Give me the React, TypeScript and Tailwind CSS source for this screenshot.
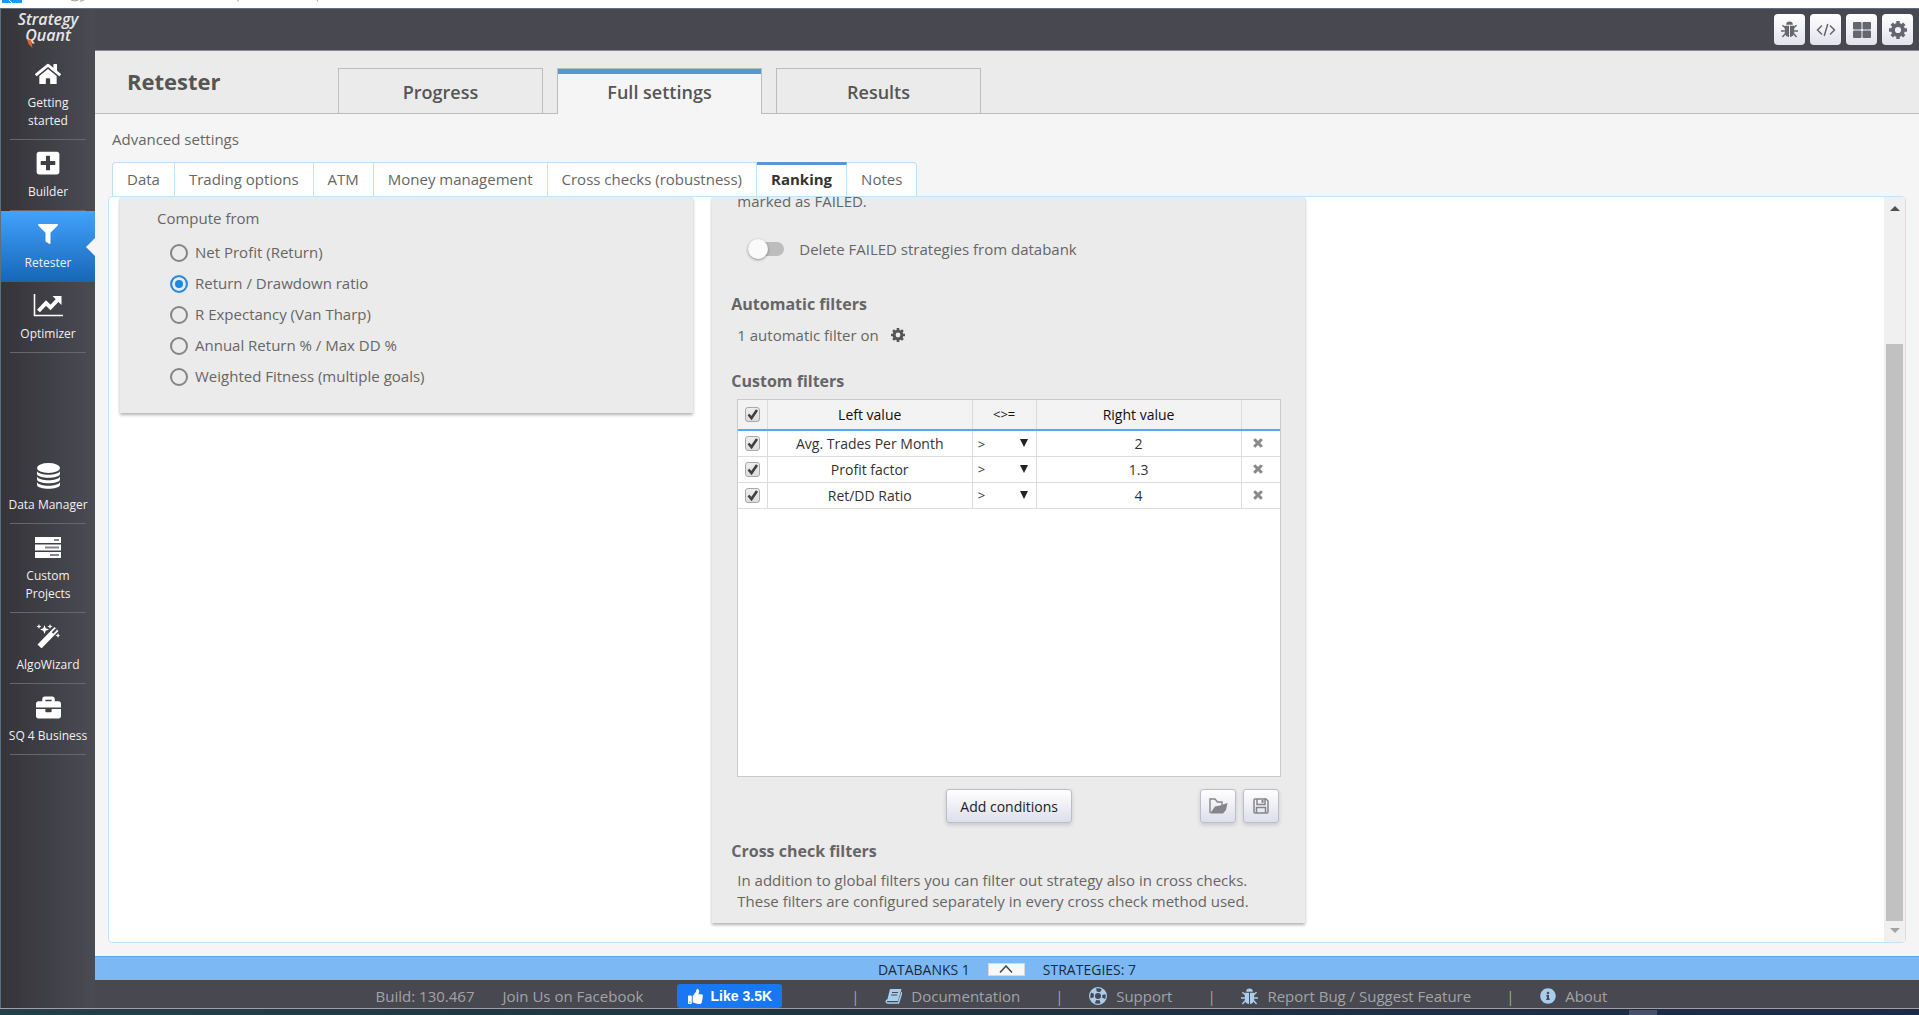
import { useState } from "react";
import type { ReactNode } from "react";
import {
  FaBriefcase,
  FaFilter,
  FaHome,
  FaInfoCircle,
  FaPlusSquare,
  FaThumbsUp,
  FaTimes,
} from "react-icons/fa";

function ChartIcon() {
  return (
    <svg width="30" height="24" viewBox="0 0 30 24" aria-hidden="true">
      <path d="M1.5 1v21.5H30" fill="none" stroke="white" strokeWidth="1.600" />
      <path d="M5.500 18l7.500-8 4.500 4.500L25 6.500" fill="none" stroke="white" strokeWidth="4" />
      <path d="M19.500 3H28.500V12z" fill="white" />
    </svg>
  );
}

function DatabaseIcon() {
  return (
    <svg width="23" height="26" viewBox="0 0 23 26" fill="white" aria-hidden="true">
      <ellipse cx="11.500" cy="5" rx="11.500" ry="5" />
      <path d="M0 8c2 5 21 5 23 0v3c-1 5-22 5-23 0z" />
      <path d="M0 13.500c2 5 21 5 23 0v3c-1 5-22 5-23 0z" />
      <path d="M0 19c2 5 21 5 23 0v3c-1 5-22 5-23 0z" />
    </svg>
  );
}

function TasksIcon() {
  return (
    <svg width="26" height="21" viewBox="0 0 26 21" aria-hidden="true">
      <path d="M0 0h26v6H0zM0 7.500h26v6H0zM0 15h26v6H0z" fill="white" />
      <path d="M19 3h5M10 10.500h14M15 18h9" stroke="#85858b" strokeWidth="2" />
    </svg>
  );
}

function WandIcon() {
  return (
    <svg width="24" height="24" viewBox="0 0 24 24" fill="white" aria-hidden="true">
      <path d="M3.500 22.500L20.500 5" stroke="white" strokeWidth="5.500" />
      <path d="M16.500 9L20.500 5" stroke="#44444c" strokeWidth="2" />
      <path d="M8.500 1l1.200 3.300L13 5.500 9.700 6.700 8.500 10 7.300 6.700 4 5.500l3.300-1.200z" />
      <path d="M3 0l.7 1.800 1.800.7-1.800.7L3 5l-.7-1.800L.5 2.500l1.800-.7zM14 0l.7 1.800 1.800.7-1.800.7L14 5l-.7-1.800-1.800-.7 1.800-.7zM22 9l.7 1.800 1.300.7-1.300.7L22 14l-.7-1.800-1.800-.7 1.800-.7z" />
    </svg>
  );
}

function BugIcon({ size }: { size: number }) {
  return (
    <svg width={size} height={size} viewBox="0 0 18 18" fill="currentColor" aria-hidden="true">
      <path d="M5.500 4a3.500 3.500 0 0 1 7 0z" />
      <path d="M4 5h4.500v12C5.500 17 4 14.500 4 12zM9.500 5H14v7c0 2.500-1.500 5-4.500 5z" />
      <path
        d="M4.500 7L1.500 4.500M4 10.500H0M4.500 13.500l-3 3.500M13.500 7l3-2.500M14 10.500h4M13.500 13.500l3 3.500"
        stroke="currentColor"
        strokeWidth="1.500"
      />
    </svg>
  );
}

function GearIcon({ size }: { size: number }) {
  return (
    <svg width={size} height={size} viewBox="0 0 18 18" fill="none" stroke="currentColor" aria-hidden="true">
      <circle cx="9" cy="9" r="5" strokeWidth="3.800" />
      <path
        d="M9 0v3.500M9 14.500V18M0 9h3.500M14.500 9H18M2.700 2.700l2.400 2.400M12.900 12.900l2.400 2.400M2.700 15.300l2.400-2.400M12.900 5.100l2.400-2.400"
        strokeWidth="3.400"
      />
    </svg>
  );
}

function BookIcon() {
  return (
    <svg width="17" height="15" viewBox="0 0 17 15" aria-hidden="true">
      <path d="M5 0h11.500L13 12H2z" fill="currentColor" />
      <path d="M2.500 10.500c-2 1.500-1.500 3.500.5 3.500h10.500L17 3" fill="none" stroke="currentColor" strokeWidth="1.500" />
      <path d="M7 3.500h6M6.200 6h6" stroke="#484850" strokeWidth="1" />
    </svg>
  );
}

function RingIcon() {
  return (
    <svg width="18" height="18" viewBox="0 0 18 18" fill="none" aria-hidden="true">
      <circle cx="9" cy="9" r="6" stroke="currentColor" strokeWidth="6" />
      <circle cx="9" cy="9" r="6" stroke="#484850" strokeWidth="3.400" strokeDasharray="4.700 4.720" strokeDashoffset="2.350" />
    </svg>
  );
}

function CodeIcon() {
  return (
    <svg width="20" height="14" viewBox="0 0 20 14" fill="none" stroke="#66666e" strokeWidth="1.500" aria-hidden="true">
      <path d="M6 2.500L1.500 7 6 11.500M14 2.500L18.500 7 14 11.500M11.800 1L8.200 13" />
    </svg>
  );
}

function GridIcon() {
  return (
    <svg width="18" height="16" viewBox="0 0 18 16" fill="#66666e" aria-hidden="true">
      <rect width="8.500" height="7.500" rx="1" />
      <rect x="9.500" width="8.500" height="7.500" rx="1" />
      <rect y="8.500" width="8.500" height="7.500" rx="1" />
      <rect x="9.500" y="8.500" width="8.500" height="7.500" rx="1" />
    </svg>
  );
}

function FolderIcon() {
  return (
    <svg width="19" height="16" viewBox="0 0 19 16" aria-hidden="true">
      <path d="M1 15V1h5l2.500 3H13v3" fill="none" stroke="#85858b" strokeWidth="1.400" />
      <path d="M1 15.500L6 8.500l5-1 7.500-2.500L17 12l-3 3.500z" fill="#85858b" />
    </svg>
  );
}

function SaveIcon() {
  return (
    <svg width="16" height="16" viewBox="0 0 16 16" fill="none" stroke="#85858b" strokeWidth="1.500" aria-hidden="true">
      <path d="M1 2a1 1 0 0 1 1-1h11l2 2v11a1 1 0 0 1-1 1H2a1 1 0 0 1-1-1z" />
      <path d="M4 1v5.500h8V1M3.500 15V9.500h9V15" />
      <path d="M9.500 2v3" strokeWidth="2" />
    </svg>
  );
}

function Logo() {
  return (
    <div className="relative h-[42px] pt-[2px] text-center text-[16px] leading-4 font-semibold italic text-[#e6e6e6]">
      Strategy
      <br />
      Quant
      <svg width="6" height="9" viewBox="0 0 6 9" className="absolute top-[30px] left-[26px]" aria-hidden="true">
        <path d="M0 0l4 1 1.500 8L1.500 5z" fill="#e0662b" />
      </svg>
    </div>
  );
}

type NavItemProps = {
  icon: ReactNode;
  label: string;
  active?: boolean;
};

function NavItem({ icon, label, active }: NavItemProps) {
  return (
    <a
      href="#"
      className={
        active
          ? "relative block bg-linear-to-b from-[#42a2fd] to-[#1567b6] px-[9px]"
          : "relative block px-[9px]"
      }
    >
      <span
        className={
          active
            ? "flex flex-col items-center border-b border-transparent pt-[13px] pb-[9px]"
            : "flex flex-col items-center border-b border-[#66666c] pt-[13px] pb-[9px]"
        }
      >
        <span className="flex h-5 items-center">{icon}</span>
        <span className="-mx-2 mt-[10px] max-w-24 text-center text-[12px] leading-[18px] whitespace-pre-line">
          {label}
        </span>
      </span>
      {active && (
        <span className="absolute top-[27px] right-0 border-y-[9px] border-r-[9px] border-y-transparent border-r-[#f5f5f5]" />
      )}
    </a>
  );
}

function Sidebar() {
  return (
    <nav className="w-[95px] shrink-0 border-l border-[#5d6f80] bg-linear-to-r from-[#343439] to-[#4b4b54] text-[#f0f0f0]">
      <Logo />
      <NavItem icon={<FaHome size={26} color="white" />} label={"Getting\nstarted"} />
      <NavItem icon={<FaPlusSquare size={26} color="white" />} label="Builder" />
      <NavItem icon={<FaFilter size={20} color="white" />} label="Retester" active />
      <NavItem icon={<ChartIcon />} label="Optimizer" />
      <div className="mt-[100px]">
        <NavItem icon={<DatabaseIcon />} label="Data Manager" />
        <NavItem icon={<TasksIcon />} label={"Custom\nProjects"} />
        <NavItem icon={<WandIcon />} label="AlgoWizard" />
        <NavItem icon={<FaBriefcase size={25} color="white" />} label="SQ 4 Business" />
      </div>
    </nav>
  );
}

function ToolButton({ label, children }: { label: string; children: ReactNode }) {
  return (
    <button
      aria-label={label}
      className="flex size-[31px] items-center justify-center rounded-[4px] bg-linear-to-b from-white to-[#e2e2ee] text-[#66666e]"
    >
      {children}
    </button>
  );
}

const mainTabs = ["Progress", "Full settings", "Results"];

function MainTabs() {
  return (
    <div className="flex h-[63px] items-end border-b border-[#b9bdc1] bg-[#ebebeb]">
      <h1 className="w-[243px] self-center pb-[2px] pl-[32px] text-[22px] leading-8 font-bold text-[#555]">
        Retester
      </h1>
      <div className="-mb-px flex gap-[14px]">
        {mainTabs.map((tab) => (
          <button
            key={tab}
            className={
              tab === "Full settings"
                ? "h-[46px] w-[205px] border border-b-0 border-[#b9bdc1] bg-[#f5f5f5] pt-[2px] text-[18px] font-semibold text-[#555] shadow-[inset_0_5px_#5896d4]"
                : "h-[46px] w-[205px] border border-[#b9bdc1] pt-[2px] text-[18px] font-semibold text-[#555]"
            }
          >
            {tab}
          </button>
        ))}
      </div>
    </div>
  );
}

const subTabs = [
  "Data",
  "Trading options",
  "ATM",
  "Money management",
  "Cross checks (robustness)",
  "Ranking",
  "Notes",
];

function SubTabs() {
  return (
    <div className="ml-1 flex">
      {subTabs.map((tab) => (
        <button
          key={tab}
          className={
            tab === "Ranking"
              ? "h-[34px] border-t-[3px] border-r border-t-[#5896d4] border-r-[#bfdffb] bg-white px-[14px] pb-[3px] font-bold text-[#333]"
              : "h-[34px] border-t border-r border-[#bfdffb] bg-white px-[14px] first:rounded-tl first:border-l last:rounded-tr"
          }
        >
          {tab}
        </button>
      ))}
    </div>
  );
}

const fitnessOptions = [
  "Net Profit (Return)",
  "Return / Drawdown ratio",
  "R Expectancy (Van Tharp)",
  "Annual Return % / Max DD %",
  "Weighted Fitness (multiple goals)",
];

function ComputeFrom() {
  const [selected, setSelected] = useState("Return / Drawdown ratio");

  return (
    <section className="w-[32.5%] shrink-0 self-start bg-[#ebebeb] pt-[10px] pb-[21px] pl-[37px] shadow-[0_2px_3px_rgba(0,0,0,0.3)]">
      <h2 className="leading-[22px]">Compute from</h2>
      <div className="mt-2 pl-[13px]">
        {fitnessOptions.map((option) => (
          <label key={option} className="flex h-[31px] items-center gap-[7px]">
            <input
              type="radio"
              name="fitness"
              checked={selected === option}
              onChange={() => setSelected(option)}
              className="size-[18px] appearance-none rounded-full border-2 border-[#858585] checked:border-[#2b8ce6] checked:bg-[#1e88e5] checked:shadow-[inset_0_0_0_3px_#ebebeb]"
            />
            {option}
          </label>
        ))}
      </div>
    </section>
  );
}

function CheckBox({ label }: { label: string }) {
  return (
    <span className="relative mx-auto block size-[15px]">
      <input
        type="checkbox"
        defaultChecked
        aria-label={label}
        className="peer block size-[15px] appearance-none rounded-[3px] border border-[#a9a9a9] bg-linear-to-b from-[#eee] to-[#dcdcdc]"
      />
      <svg
        viewBox="0 0 15 15"
        className="pointer-events-none absolute inset-0 hidden peer-checked:block"
        fill="none"
        stroke="#404040"
        strokeWidth="2.600"
        aria-hidden="true"
      >
        <path d="M3.500 7.500l3 3.500L12 3" />
      </svg>
    </span>
  );
}

const filters = [
  { left: "Avg. Trades Per Month", right: "2" },
  { left: "Profit factor", right: "1.3" },
  { left: "Ret/DD Ratio", right: "4" },
];

function FilterTable() {
  return (
    <div className="h-[378px] border border-[#c9c9c9] bg-white text-[14px] text-[#333]">
      <table className="w-full table-fixed border-collapse text-center">
        <colgroup>
          <col className="w-[29px]" />
          <col />
          <col className="w-[64px]" />
          <col />
          <col className="w-[39px]" />
        </colgroup>
        <thead>
          <tr className="h-[30px] border-b-2 border-[#56a9ea] bg-[#f3f3f3] text-[#111]">
            <th className="border-r border-r-[#dcdcdc]">
              <CheckBox label="All filters" />
            </th>
            <th className="border-r border-r-[#dcdcdc] font-normal">Left value</th>
            <th className="border-r border-r-[#dcdcdc] text-[13px] font-normal">&lt;&gt;=</th>
            <th className="border-r border-r-[#dcdcdc] font-normal">Right value</th>
            <th />
          </tr>
        </thead>
        <tbody>
          {filters.map((filter) => (
            <tr key={filter.left} className="h-[26px] border-b border-[#dcdcdc]">
              <td className="border-r border-[#dcdcdc]">
                <CheckBox label={filter.left} />
              </td>
              <td className="border-r border-[#dcdcdc]">{filter.left}</td>
              <td className="border-r border-[#dcdcdc]">
                <span className="relative flex items-center">
                  <select
                    aria-label={`${filter.left} comparison`}
                    className="w-full appearance-none pt-[2px] pl-[5px] text-[13px]"
                  >
                    <option>&gt;</option>
                    <option>&lt;</option>
                    <option>=</option>
                  </select>
                  <svg width="8" height="8" viewBox="0 0 8 8" className="pointer-events-none absolute right-2" aria-hidden="true">
                    <path d="M0 0h8L4 8z" fill="#222" />
                  </svg>
                </span>
              </td>
              <td className="border-r border-[#dcdcdc]">{filter.right}</td>
              <td>
                <button aria-label={`Remove ${filter.left}`} className="block pl-[10px] text-[#888]">
                  <FaTimes size={12} stroke="currentColor" strokeWidth={40} />
                </button>
              </td>
            </tr>
          ))}
        </tbody>
      </table>
    </div>
  );
}

const raised =
  "flex h-[34px] items-center justify-center rounded-[3px] border border-[#bcbccb] bg-linear-to-b from-white to-[#dedeec] shadow-[0_2px_4px_rgba(0,0,0,0.15)]";

function Filters() {
  return (
    <section className="w-[33.6%] shrink-0 self-start bg-[#ebebeb] pr-6 pb-[11px] pl-[19px] shadow-[0_2px_3px_rgba(0,0,0,0.3)]">
      <p className="-mt-[7px] pl-[6px] leading-[22px]">marked as FAILED.</p>
      <label className="mt-[26px] flex h-[22px] items-center pl-[17px]">
        <input type="checkbox" role="switch" className="peer sr-only" />
        <span className="flex h-[14px] w-9 items-center rounded-full bg-[#bdbdbd] peer-checked:justify-end">
          <span className="size-5 shrink-0 rounded-full bg-[#fafafa] shadow-[0_1px_3px_rgba(0,0,0,0.4)]" />
        </span>
        <span className="ml-[15px]">Delete FAILED strategies from databank</span>
      </label>

      <h2 className="mt-[33px] text-[16px] font-bold leading-[22px]">Automatic filters</h2>
      <p className="mt-[9px] flex items-center gap-3 pl-[6px] leading-[22px]">
        1 automatic filter on
        <button aria-label="Automatic filter settings" className="text-[#555]">
          <GearIcon size={14} />
        </button>
      </p>

      <h2 className="mt-6 mb-[7px] text-[16px] font-bold leading-[22px]">Custom filters</h2>
      <div className="pl-[6px]">
        <FilterTable />
        <div className="mt-[12px] grid grid-cols-[1fr_auto_1fr]">
          <button className={`${raised} col-start-2 px-[13px] text-[14px] text-[#222]`}>
            Add conditions
          </button>
          <div className="flex justify-end gap-[7px] pr-[2px]">
            <button aria-label="Load conditions" className={`${raised} w-9`}>
              <FolderIcon />
            </button>
            <button aria-label="Save conditions" className={`${raised} w-9`}>
              <SaveIcon />
            </button>
          </div>
        </div>
      </div>

      <h2 className="mt-[17px] text-[16px] font-bold leading-[22px]">Cross check filters</h2>
      <p className="mt-2 pl-[6px] leading-[21px]">
        In addition to global filters you can filter out strategy also in cross checks.
        <br />
        These filters are configured separately in every cross check method used.
      </p>
    </section>
  );
}

function ScrollTrack() {
  return (
    <div className="flex w-[21px] shrink-0 flex-col items-center bg-[#f0f0f0] pt-[9px] pb-[9px]">
      <span className="border-x-[5px] border-b-[5px] border-x-transparent border-b-[#505050]" />
      <span className="grow-20" />
      <span className="w-[17px] grow-87 bg-[#c1c1c1]" />
      <span className="mt-[7px] border-x-[5px] border-t-[5px] border-x-transparent border-t-[#a3a3a3]" />
    </div>
  );
}

function DatabankBar() {
  return (
    <div className="flex h-6 shrink-0 items-center justify-center gap-[18px] border-t border-[#5aa9f0] bg-[#7cb9f4] pt-px text-[14px] text-[#1d2a36]">
      <span>DATABANKS 1</span>
      <button
        aria-label="Show databanks"
        className="flex h-[13px] w-[37px] items-center justify-center border border-[#d8d8d8] bg-[#f8f8f8]"
      >
        <svg width="14" height="8" viewBox="0 0 14 8" fill="none" stroke="#444" strokeWidth="1.500" aria-hidden="true">
          <path d="M1 7.500L7 1l6 6.500" />
        </svg>
      </button>
      <span>STRATEGIES: 7</span>
    </div>
  );
}

function FooterLink({ icon, label }: { icon: ReactNode; label: string }) {
  return (
    <>
      <span className="w-[2px]">|</span>
      <a href="#" className="mr-[35px] ml-[32px] flex items-center gap-[9px]">
        <span className="text-[#a9cdec]">{icon}</span>
        {label}
      </a>
    </>
  );
}

function Footer() {
  return (
    <footer className="flex h-7 shrink-0 items-center justify-center bg-[#484850] pt-1 pl-1 text-[15px] whitespace-nowrap text-[#a3a3a6]">
      <span>Build: 130.467</span>
      <a href="#" className="ml-7">
        Join Us on Facebook
      </a>
      <button className="mr-[69px] ml-[34px] flex h-6 w-[105px] items-center justify-center gap-2 rounded-[3px] bg-[#1877f2] font-['Liberation_Sans',sans-serif] text-[14px] font-bold text-white">
        <FaThumbsUp size={15} />
        Like 3.5K
      </button>
      <FooterLink icon={<BookIcon />} label="Documentation" />
      <FooterLink icon={<RingIcon />} label="Support" />
      <FooterLink icon={<BugIcon size={17} />} label="Report Bug / Suggest Feature" />
      <FooterLink icon={<FaInfoCircle size={16} />} label="About" />
    </footer>
  );
}

export default function App() {
  return (
    <div className="flex h-screen flex-col overflow-hidden bg-[#f5f5f5] font-['Open_Sans',sans-serif] text-[15px] text-[#666]">
      <div className="flex h-2 shrink-0 bg-white">
        <svg width="330" height="3" viewBox="0 0 330 3" fill="none" aria-hidden="true">
          <path d="M2 0h20v3H2z" fill="#2196f3" />
          <path d="M9 0l3 3" stroke="white" />
          <path d="M71 0q4 2 7 0M80 1q3 0 4-1M238 0v1.500M317 0l1 1.500" stroke="#999" />
        </svg>
      </div>
      <div className="flex min-h-0 grow border-t border-[#5d6f80]">
        <Sidebar />
        <div className="flex min-w-0 grow flex-col">
          <header className="flex h-[42px] shrink-0 items-center justify-end gap-[5px] border-b border-[#8a8a90] bg-[#484850] pr-[6px]">
            <ToolButton label="Report bug">
              <BugIcon size={17} />
            </ToolButton>
            <ToolButton label="Code editor">
              <CodeIcon />
            </ToolButton>
            <ToolButton label="Layout">
              <GridIcon />
            </ToolButton>
            <ToolButton label="Settings">
              <GearIcon size={18} />
            </ToolButton>
          </header>
          <MainTabs />
          <main className="flex min-h-0 grow flex-col px-[13px] pt-[14px] pb-[13px]">
            <p className="mb-[12px] pl-1 leading-[22px]">Advanced settings</p>
            <SubTabs />
            <div className="flex min-h-0 grow rounded-[4px] border border-[#c5e2fb] bg-white">
              <div className="flex min-w-0 grow gap-[19px] overflow-hidden pl-[11px]">
                <ComputeFrom />
                <Filters />
              </div>
              <ScrollTrack />
            </div>
          </main>
          <DatabankBar />
          <Footer />
        </div>
      </div>
      <div className="flex h-[7px] shrink-0 justify-end border-t border-[#a0a0a4] bg-linear-to-r from-[#22404a] via-[#20313f] to-[#1b2a48] pt-px pr-[262px]">
        <span className="w-7 bg-[#46506a]" />
      </div>
    </div>
  );
}
